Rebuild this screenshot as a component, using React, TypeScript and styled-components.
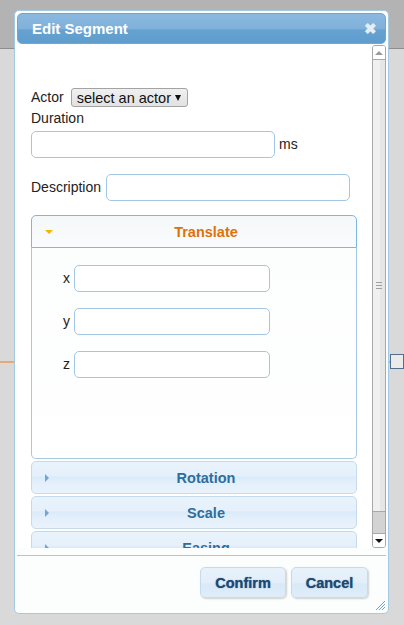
import React from 'react';
import styled, { createGlobalStyle } from 'styled-components';

const GlobalStyle = createGlobalStyle`
  html, body {
    margin: 0;
    padding: 0;
    background: #d9d9d9;
  }
  body {
    font-family: "Liberation Sans", Arial, sans-serif;
    font-size: 14px;
    color: #222;
  }
`;

const Page = styled.div`
  position: relative;
  width: 404px;
  height: 625px;
  overflow: hidden;
  box-sizing: border-box;
  padding: 10px 0 0 14px;
  background: linear-gradient(
    to bottom,
    #b3b3b3 0px,
    #b3b3b3 48px,
    #8d8d8d 48px,
    #8d8d8d 49px,
    #d9d9d9 49px
  );
`;

const CanvasLine = styled.div`
  position: absolute;
  left: 0;
  top: 361px;
  width: 404px;
  height: 2px;
  background: #e8a878;
`;

const CanvasNode = styled.div`
  position: absolute;
  left: 390px;
  top: 354px;
  width: 12px;
  height: 13px;
  border: 1px solid #52708e;
  background: #ebebeb;
`;

const Dialog = styled.div`
  position: relative;
  z-index: 1;
  width: 375px;
  height: 604px;
  box-sizing: border-box;
  border: 1px solid #a6c9e2;
  border-radius: 5px;
  padding: 2px;
  background: #fcfdfd;
  display: flex;
  flex-direction: column;
`;

const TitleBar = styled.div`
  height: 31px;
  box-sizing: border-box;
  border: 1px solid #6ea7d6;
  border-radius: 5px;
  background: linear-gradient(to bottom, #8ab8df 0%, #80b1da 50%, #66a2d1 55%, #5e9dcd 100%);
  display: flex;
  align-items: center;
  justify-content: space-between;
  padding: 0 8px 0 14px;
`;

const Title = styled.span`
  color: #fff;
  font-weight: bold;
  font-size: 15px;
`;

const Close = styled.span`
  color: #e4eef8;
  font-weight: bold;
  font-size: 15px;
  line-height: 1;
`;

const BodyRow = styled.div`
  display: flex;
  height: 503px;
  margin-top: 1px;
`;

const Content = styled.div`
  flex: 1;
  overflow: hidden;
  background: #fff;
  padding: 43px 15px 0 14px;
`;

const Scrollbar = styled.div`
  width: 14px;
  box-sizing: border-box;
  border: 1px solid #a8a8a8;
  border-radius: 3px;
  display: flex;
  flex-direction: column;
  background: #fff;
  overflow: hidden;
`;

const ScrollButton = styled.div<{ $dark?: boolean }>`
  height: 13px;
  display: flex;
  align-items: center;
  justify-content: center;
  background: #fff;
  &::before {
    content: '';
    width: 0;
    height: 0;
    border-left: 4px solid transparent;
    border-right: 4px solid transparent;
    ${({ $dark }) =>
      $dark ? 'border-top: 4px solid #111;' : 'border-bottom: 4px solid #9a9a9a;'}
  }
`;

const Thumb = styled.div`
  flex: 1;
  border-top: 1px solid #a8a8a8;
  border-bottom: 1px solid #a8a8a8;
  background: linear-gradient(to right, #f0f0f0 0%, #f0f0f0 55%, #e6e6e6 55%, #e6e6e6 100%);
  display: flex;
  align-items: center;
  justify-content: center;
`;

const Grip = styled.div`
  width: 6px;
  height: 5px;
  border-top: 1px solid #a0a0a0;
  border-bottom: 1px solid #a0a0a0;
  position: relative;
  &::after {
    content: '';
    position: absolute;
    left: 0;
    right: 0;
    top: 2px;
    height: 1px;
    background: #a0a0a0;
  }
`;

const Track = styled.div`
  height: 21px;
  background: #d3d3d3;
  border-bottom: 1px solid #a8a8a8;
`;

const Row = styled.div`
  display: flex;
  align-items: center;
  gap: 4px;
`;

const ActorRow = styled(Row)`
  gap: 7px;
`;

const Label = styled.label`
  font-size: 14px;
  line-height: 19px;
  color: #222;
`;

const LabelLine = styled(Label)`
  display: block;
  margin-top: 2px;
`;

const Select = styled.div`
  width: 117px;
  height: 19px;
  box-sizing: border-box;
  padding: 0 6px 0 5px;
  border: 1px solid #a3a3a3;
  border-radius: 3px;
  background: linear-gradient(to bottom, #f0f0f0, #e2e2e2);
  display: flex;
  align-items: center;
  justify-content: space-between;
  font-size: 14.5px;
  color: #111;
`;

const Caret = styled.span`
  width: 0;
  height: 0;
  border-left: 3.5px solid transparent;
  border-right: 3.5px solid transparent;
  border-top: 6px solid #111;
`;

const TextInput = styled.input<{ $width?: number }>`
  width: ${({ $width }) => $width ?? 244}px;
  height: 27px;
  box-sizing: border-box;
  border: 1px solid #a3c6e4;
  border-radius: 5px;
  background: #fff;
  padding: 0 6px;
  font: inherit;
  outline: none;
`;

const DurationRow = styled(Row)`
  margin-top: 3px;
`;

const DescRow = styled(Row)`
  margin-top: 16px;
  gap: 5px;
`;

const Accordion = styled.div`
  margin-top: 14px;
  display: flex;
  flex-direction: column;
  gap: 2px;
`;

const Section = styled.div``;

const Header = styled.div<{ $active?: boolean }>`
  height: 33px;
  box-sizing: border-box;
  position: relative;
  display: flex;
  align-items: center;
  justify-content: center;
  padding-left: 24px;
  font-size: 14.5px;
  font-weight: bold;
  border: 1px solid ${({ $active }) => ($active ? '#79b7e7' : '#c5dbec')};
  border-radius: ${({ $active }) => ($active ? '5px 5px 0 0' : '5px')};
  color: ${({ $active }) => ($active ? '#e17009' : '#2e6e9e')};
  background: ${({ $active }) =>
    $active
      ? 'linear-gradient(to bottom, #f5f8f9 0%, #f9fbfc 100%)'
      : 'linear-gradient(to bottom, #e9f3fc 0%, #e6f0fb 45%, #d9eaf9 48%, #e1eefa 60%, #eaf3fc 100%)'};
`;

const Arrow = styled.span<{ $down?: boolean }>`
  position: absolute;
  left: 13px;
  top: 50%;
  width: 0;
  height: 0;
  ${({ $down }) =>
    $down
      ? `
    margin-top: -2px;
    border-left: 4px solid transparent;
    border-right: 4px solid transparent;
    border-top: 4px solid #f5b400;
  `
      : `
    margin-top: -4px;
    border-top: 4px solid transparent;
    border-bottom: 4px solid transparent;
    border-left: 4px solid #6fa6d8;
  `}
`;

const Panel = styled.div`
  height: 211px;
  box-sizing: border-box;
  border: 1px solid #a6c9e2;
  border-top: none;
  border-radius: 0 0 5px 5px;
  background: linear-gradient(to bottom, #fcfdfd, #fff);
  padding: 17px 0 0 31px;
  display: flex;
  flex-direction: column;
  gap: 16px;
`;

const AxisRow = styled(Row)`
  gap: 4px;
`;

const AxisLabel = styled(Label)`
  width: 7px;
`;

const Footer = styled.div`
  flex: 1;
  margin-top: 7px;
  border-top: 1px solid #a6c9e2;
  display: flex;
  justify-content: flex-end;
  align-items: flex-start;
  gap: 5px;
  padding: 11px 18px 0 0;
  position: relative;
`;

const Button = styled.button<{ $width: number }>`
  width: ${({ $width }) => $width}px;
  height: 31px;
  border: 1px solid #c5dbec;
  border-radius: 5px;
  background: linear-gradient(to bottom, #e8f2fb 0%, #e3eefa 50%, #d8e9f8 55%, #e0edf9 100%);
  box-shadow: 1px 1px 2px rgba(0, 0, 0, 0.18);
  font-family: "Liberation Sans", Arial, sans-serif;
  font-size: 14.5px;
  font-weight: bold;
  color: #1d4a74;
  text-shadow: 0 0 1px rgba(29, 74, 116, 0.8);
  padding: 0;
`;

const Resize = styled.svg`
  position: absolute;
  right: 0;
  bottom: 0;
`;

export default function App() {
  return (
    <>
      <GlobalStyle />
      <Page>
        <CanvasLine />
        <CanvasNode />
        <Dialog>
          <TitleBar>
            <Title>Edit Segment</Title>
            <Close>✖</Close>
          </TitleBar>
          <BodyRow>
            <Content>
              <ActorRow>
                <Label>Actor</Label>
                <Select>
                  select an actor
                  <Caret />
                </Select>
              </ActorRow>
              <LabelLine>Duration</LabelLine>
              <DurationRow>
                <TextInput />
                <Label>ms</Label>
              </DurationRow>
              <DescRow>
                <Label>Description</Label>
                <TextInput />
              </DescRow>
              <Accordion>
                <Section>
                  <Header $active>
                    <Arrow $down />
                    Translate
                  </Header>
                  <Panel>
                    {['x', 'y', 'z'].map(axis => (
                      <AxisRow key={axis}>
                        <AxisLabel>{axis}</AxisLabel>
                        <TextInput $width={196} />
                      </AxisRow>
                    ))}
                  </Panel>
                </Section>
                {['Rotation', 'Scale', 'Easing'].map(name => (
                  <Header key={name}>
                    <Arrow />
                    {name}
                  </Header>
                ))}
              </Accordion>
            </Content>
            <Scrollbar>
              <ScrollButton />
              <Thumb>
                <Grip />
              </Thumb>
              <Track />
              <ScrollButton $dark />
            </Scrollbar>
          </BodyRow>
          <Footer>
            <Button $width={86}>Confirm</Button>
            <Button $width={77}>Cancel</Button>
            <Resize width="12" height="12" viewBox="0 0 12 12">
              <path d="M11 2 L2 11 M11 5 L5 11 M11 8 L8 11" stroke="#6ba4d8" strokeWidth="1" fill="none" />
            </Resize>
          </Footer>
        </Dialog>
      </Page>
    </>
  );
}
